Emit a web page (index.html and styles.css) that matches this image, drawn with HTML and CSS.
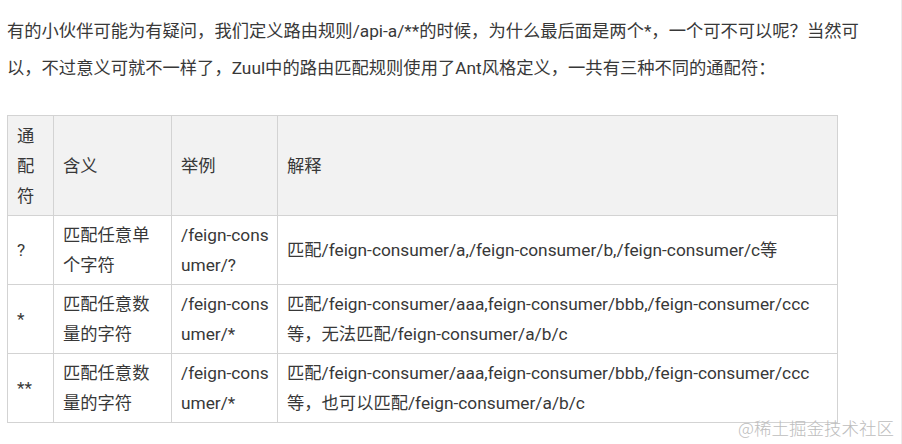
FILE: index.html
```html
<!DOCTYPE html>
<html lang="zh-CN">
<head>
<meta charset="utf-8">
<title>Zuul 通配符</title>
<link rel="stylesheet" href="styles.css">
</head>
<body>
<div class="page">
  <article class="article">
    <p class="intro">有的小伙伴可能为有疑问，我们定义路由规则/api-a/**的时候，为什么最后面是两个*，一个可不可以呢？当然可以，不过意义可就不一样了，Zuul中的路由匹配规则使用了Ant风格定义，一共有三种不同的通配符：</p>
    <table class="rules">
      <colgroup>
        <col class="c-sym">
        <col class="c-mean">
        <col class="c-ex">
        <col class="c-desc">
      </colgroup>
      <thead>
        <tr>
          <th>通配符</th>
          <th>含义</th>
          <th>举例</th>
          <th>解释</th>
        </tr>
      </thead>
      <tbody>
        <tr>
          <td>?</td>
          <td>匹配任意单个字符</td>
          <td class="ex">/feign-consumer/?</td>
          <td class="desc">匹配/feign-consumer/a,/feign-consumer/b,/feign-consumer/c等</td>
        </tr>
        <tr>
          <td>*</td>
          <td>匹配任意数量的字符</td>
          <td class="ex">/feign-consumer/*</td>
          <td class="desc">匹配/feign-consumer/aaa,feign-consumer/bbb,/feign-consumer/ccc等，无法匹配/feign-consumer/a/b/c</td>
        </tr>
        <tr>
          <td>**</td>
          <td>匹配任意数量的字符</td>
          <td class="ex">/feign-consumer/*</td>
          <td class="desc">匹配/feign-consumer/aaa,feign-consumer/bbb,/feign-consumer/ccc等，也可以匹配/feign-consumer/a/b/c</td>
        </tr>
      </tbody>
    </table>
  </article>
  <div class="watermark">@稀土掘金技术社区</div>
</div>
</body>
</html>
```
FILE: styles.css
```css
* { box-sizing: border-box; }
html, body { margin: 0; padding: 0; background: #fff; }
.page {
  position: relative;
  width: 902px;
  height: 444px;
  border-right: 1px solid #ececec;
  overflow: hidden;
  font-family: Roboto, "Noto Sans CJK SC", sans-serif;
  font-size: 17.3px;
  color: #383838;
}
.article {
  padding: 13px 0 0 7px;
  width: 890px;
}
.intro {
  margin: 0;
  line-height: 37px;
}
.rules {
  margin-top: 28px;
  border-collapse: collapse;
  table-layout: fixed;
  width: 830px;
  line-height: 30px;
}
.c-sym { width: 46px; }
.c-mean { width: 118px; }
.c-ex { width: 106px; }
.c-desc { width: 560px; }
.rules th, .rules td {
  border: 1px solid #d3d3d3;
  padding: 4px 9px;
  text-align: left;
  font-weight: normal;
  vertical-align: middle;
}
.rules th {
  background: #f2f2f2;
  padding-top: 5px;
}
.rules td.ex {
  word-break: break-all;
  padding-right: 4px;
}
.watermark {
  position: absolute;
  right: 7px;
  bottom: 5px;
  font-size: 17.5px;
  line-height: 22px;
  color: #bdbdbd;
  font-family: "Noto Sans CJK SC", sans-serif;
  font-weight: 300;
}
```
